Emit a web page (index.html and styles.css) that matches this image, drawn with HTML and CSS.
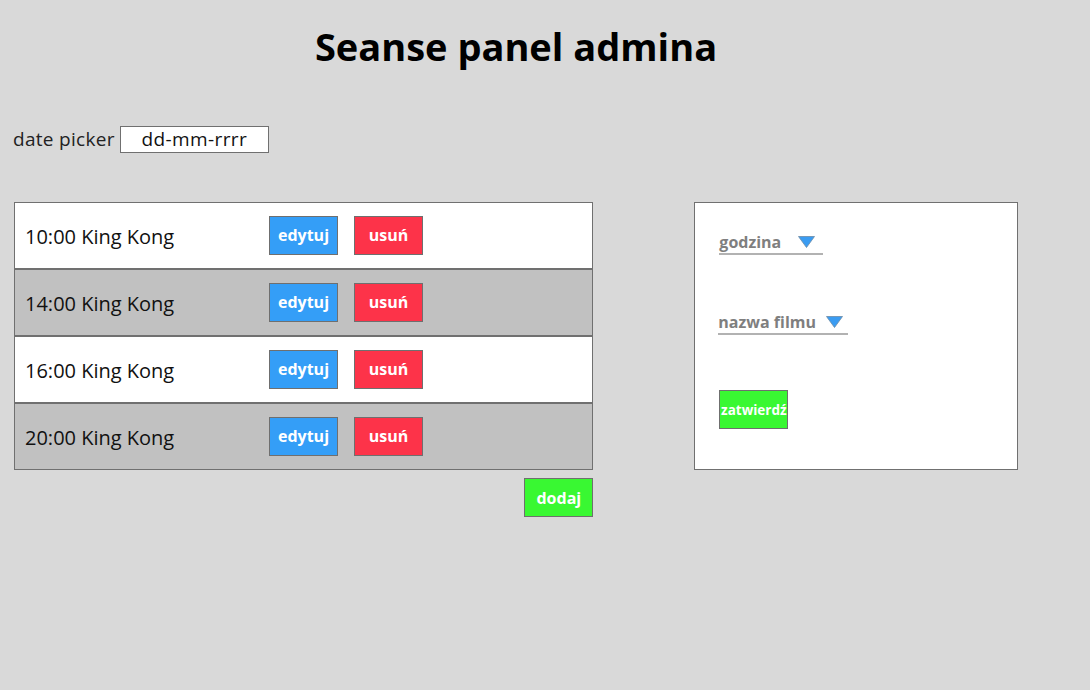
FILE: index.html
```html
<!DOCTYPE html>
<html lang="pl">
<head>
<meta charset="utf-8">
<title>Seanse panel admina</title>
<link rel="stylesheet" href="styles.css">
</head>
<body>
<div class="page">
  <h1 class="title">Seanse panel admina</h1>
  <div class="date-row">
    <span class="date-label">date picker</span>
    <div class="date-input">dd-mm-rrrr</div>
  </div>
  <div class="main">
    <div class="list-col">
      <div class="list">
        <div class="row">
          <span class="row-label">10:00 King Kong</span>
          <button class="btn btn-blue">edytuj</button>
          <button class="btn btn-red">usuń</button>
        </div>
        <div class="row row-alt">
          <span class="row-label">14:00 King Kong</span>
          <button class="btn btn-blue">edytuj</button>
          <button class="btn btn-red">usuń</button>
        </div>
        <div class="row">
          <span class="row-label">16:00 King Kong</span>
          <button class="btn btn-blue">edytuj</button>
          <button class="btn btn-red">usuń</button>
        </div>
        <div class="row row-alt">
          <span class="row-label">20:00 King Kong</span>
          <button class="btn btn-blue">edytuj</button>
          <button class="btn btn-red">usuń</button>
        </div>
      </div>
      <div class="add-row">
        <button class="btn btn-green">dodaj</button>
      </div>
    </div>
    <div class="panel">
      <div class="select select-hour">
        <span class="select-text">godzina</span>
        <svg class="tri" width="17" height="12" viewBox="0 0 17 12"><polygon points="0.5,0.5 16.5,0.5 8.5,11.5" fill="#3a9cf2" stroke="#6b8aa6" stroke-width="0.8"/></svg>
      </div>
      <div class="select select-film">
        <span class="select-text">nazwa filmu</span>
        <svg class="tri" width="17" height="12" viewBox="0 0 17 12"><polygon points="0.5,0.5 16.5,0.5 8.5,11.5" fill="#3a9cf2" stroke="#6b8aa6" stroke-width="0.8"/></svg>
      </div>
      <button class="btn btn-green btn-submit">zatwierdź</button>
    </div>
  </div>
</div>
</body>
</html>
```

FILE: styles.css
```css
* { box-sizing: border-box; }

html, body {
  margin: 0;
  padding: 0;
  background: #d9d9d9;
}

body {
  font-family: "Open Sans", "Noto Sans", sans-serif;
  color: #000;
  width: 1090px;
  height: 690px;
  overflow: hidden;
}

.page {
  padding-left: 14px;
  width: 1018px;
}

.title {
  margin: 20px 0 0 0;
  font-size: 38px;
  line-height: 52px;
  font-weight: 700;
  text-align: center;
}

.date-row {
  display: flex;
  align-items: center;
  margin-top: 54px;
  margin-left: -1px;
  height: 26px;
}

.date-label {
  font-size: 19px;
  letter-spacing: 0.3px;
  color: #222;
}

.date-input {
  margin-left: 5px;
  width: 149px;
  height: 27px;
  background: #fff;
  border: 1px solid #707070;
  font-size: 19px;
  letter-spacing: 0.4px;
  line-height: 24px;
  text-align: center;
  color: #111;
}

.main {
  display: flex;
  align-items: flex-start;
  gap: 101px;
  margin-top: 50px;
}

.list-col {
  width: 580px;
  display: flex;
  flex-direction: column;
}

.list {
  border: 1px solid #707070;
  background: #fff;
}

.row {
  height: 65px;
  display: flex;
  align-items: center;
  padding-left: 10px;
  background: #fff;
}

.row + .row {
  border-top: 2px solid #707070;
  height: 67px;
}

.row-alt {
  background: #c1c1c1;
}

.row-label {
  width: 244px;
  font-size: 20px;
  color: #111;
  padding-top: 2px;
}

.row .btn {
  margin-top: -1px;
}

.btn {
  width: 69px;
  height: 39px;
  border: 1px solid #6f6f6f;
  color: #fff;
  font-family: "Open Sans", "Noto Sans", sans-serif;
  font-weight: 700;
  font-size: 16px;
  padding: 0;
  display: flex;
  align-items: center;
  justify-content: center;
  cursor: pointer;
}

.btn-blue {
  background: #349ef7;
  margin-right: 16px;
}

.btn-red {
  background: #fd3349;
}

.btn-green {
  background: #39f832;
}

.add-row {
  display: flex;
  justify-content: flex-end;
  margin-top: 8px;
}

.panel {
  width: 324px;
  height: 268px;
  background: #fff;
  border: 1px solid #707070;
  padding: 0 0 0 23px;
  display: flex;
  flex-direction: column;
  align-items: flex-start;
}

.select {
  display: flex;
  align-items: center;
  border-bottom: 2px solid #b2b2b2;
  height: 24px;
}

.select-hour {
  margin-top: 28px;
  width: 104px;
  margin-left: 1px;
}

.select-film {
  margin-top: 56px;
  width: 130px;
}

.select-text {
  font-size: 16px;
  font-weight: 700;
  color: #7f7f7f;
  line-height: 20px;
}

.select-hour .tri {
  margin-left: 17px;
}

.select-film .tri {
  margin-left: 10px;
}

.btn-submit {
  margin-top: 55px;
  margin-left: 1px;
  font-size: 13.5px;
}
```
